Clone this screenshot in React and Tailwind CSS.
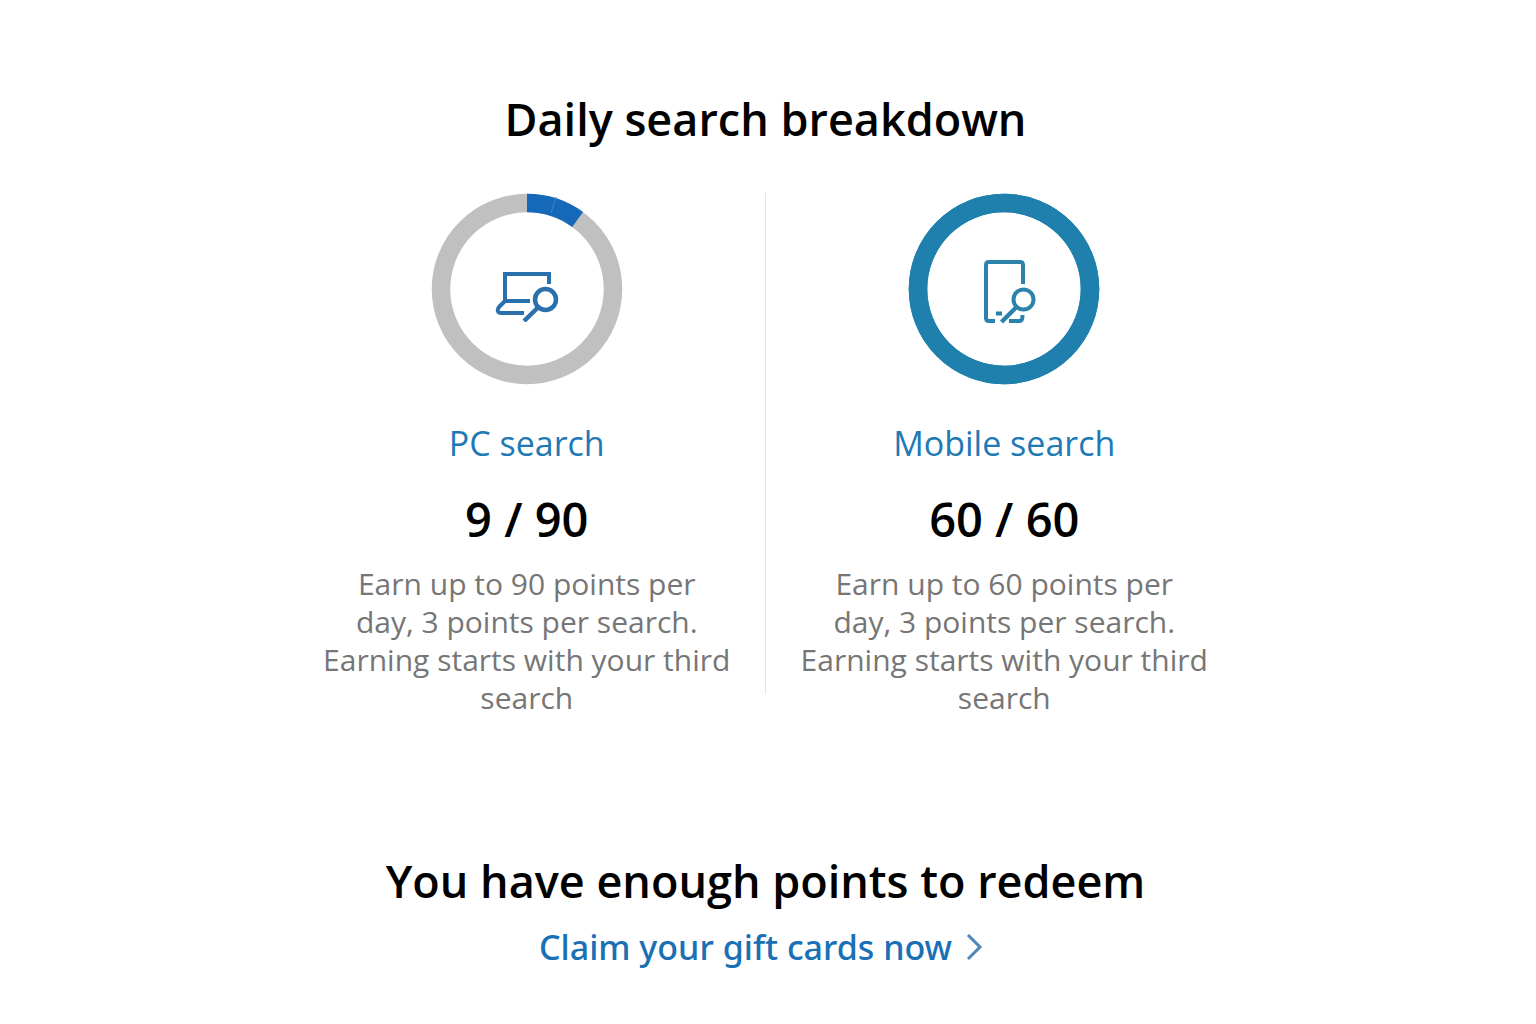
const PcSearchIcon = () => (
  <svg width="64" height="66" viewBox="0 -14 64 66" fill="none" stroke="#2a70ad" strokeWidth="4" aria-hidden="true">
    <path d="M54 14V4H10V31H35" />
    <path d="M10 31L4.500 36.500C1.500 39.500 2.500 43 6 43H29" />
    <circle cx="50.500" cy="29.500" r="10.500" strokeWidth="4.500" />
    <path d="M43 37.500L29 51" strokeWidth="4.500" />
  </svg>
)

const MobileSearchIcon = () => (
  <svg width="64" height="70" viewBox="-12 -6 64 70" fill="none" stroke="#2b83ab" strokeWidth="4" aria-hidden="true">
    <path d="M39 24V5Q39 2 36 2H5Q2 2 2 5V58Q2 61 5 61H11" />
    <circle cx="39.500" cy="39.500" r="10" />
    <path d="M32 47.500L17.500 62" strokeWidth="4.500" />
    <path d="M12 53.500H18" />
    <path d="M25 61H36Q38.500 61 38.500 55" />
  </svg>
)

const searches = [
  {
    title: "PC search",
    earned: 9,
    max: 90,
    track: "#c0c0c0",
    color: "#1668b8",
    icon: <PcSearchIcon />,
  },
  {
    title: "Mobile search",
    earned: 60,
    max: 60,
    track: "#1f80ae",
    color: "#1f80ae",
    icon: <MobileSearchIcon />,
  },
]

function ProgressRing({ earned, max, track, color, icon }) {
  const radius = 86
  const length = 2 * Math.PI * radius

  return (
    <div className="relative h-48 w-48">
      <svg viewBox="0 0 192 192" fill="none" strokeWidth="18.5" className="h-full w-full" aria-hidden="true">
        <circle cx="96" cy="96" r={radius} stroke={track} />
        <circle
          cx="96"
          cy="96"
          r={radius}
          stroke={color}
          strokeDasharray={`${(earned / max) * length} ${length}`}
          transform="rotate(-90 96 96)"
        />
        {earned < max && <path d="M120 20L125 4" stroke="#3d84c6" strokeWidth="1" />}
      </svg>
      <div className="absolute inset-0 flex items-center justify-center">{icon}</div>
    </div>
  )
}

function SearchCard({ data }) {
  return (
    <section className="flex flex-1 flex-col items-center text-center">
      <ProgressRing {...data} />
      <a href="#" className="mt-[34px] text-[34px] leading-12 text-[#2079b4]">
        {data.title}
      </a>
      <p className="mt-6 text-[47px] leading-14 font-semibold text-black">{`${data.earned} / ${data.max}`}</p>
      <p className="mt-[18px] max-w-[420px] text-[30px] leading-[38px] text-[#767676]">
        {`Earn up to ${data.max} points per`}
        <br />
        day, 3 points per search.
        <br />
        Earning starts with your third
        <br />
        search
      </p>
    </section>
  )
}

function App() {
  return (
    <main className="min-h-screen bg-white pt-[87px] pr-[5px] font-['Open_Sans',sans-serif]">
      <h1 className="text-center text-[45px] leading-16 font-semibold text-black">Daily search breakdown</h1>

      <div className="mx-auto mt-[42px] flex max-w-[954px] items-start">
        <SearchCard data={searches[0]} />
        <div className="h-[501px] w-px bg-[#e4e4e4]" />
        <SearchCard data={searches[1]} />
      </div>

      <div className="mt-33 text-center">
        <h2 className="text-[45px] leading-16 font-semibold text-black">You have enough points to redeem</h2>
        <a
          href="#"
          className="inline-flex items-center gap-3 pr-2 font-['Noto_Sans',sans-serif] text-[34px] leading-[68px] font-medium text-[#1a70b5]"
        >
          Claim your gift cards now
          <svg width="20" height="28" viewBox="0 0 20 28" fill="none" stroke="#4d86b8" strokeWidth="3" aria-hidden="true">
            <path d="M4 2L16 14L4 26" />
          </svg>
        </a>
      </div>
    </main>
  )
}

export default App
